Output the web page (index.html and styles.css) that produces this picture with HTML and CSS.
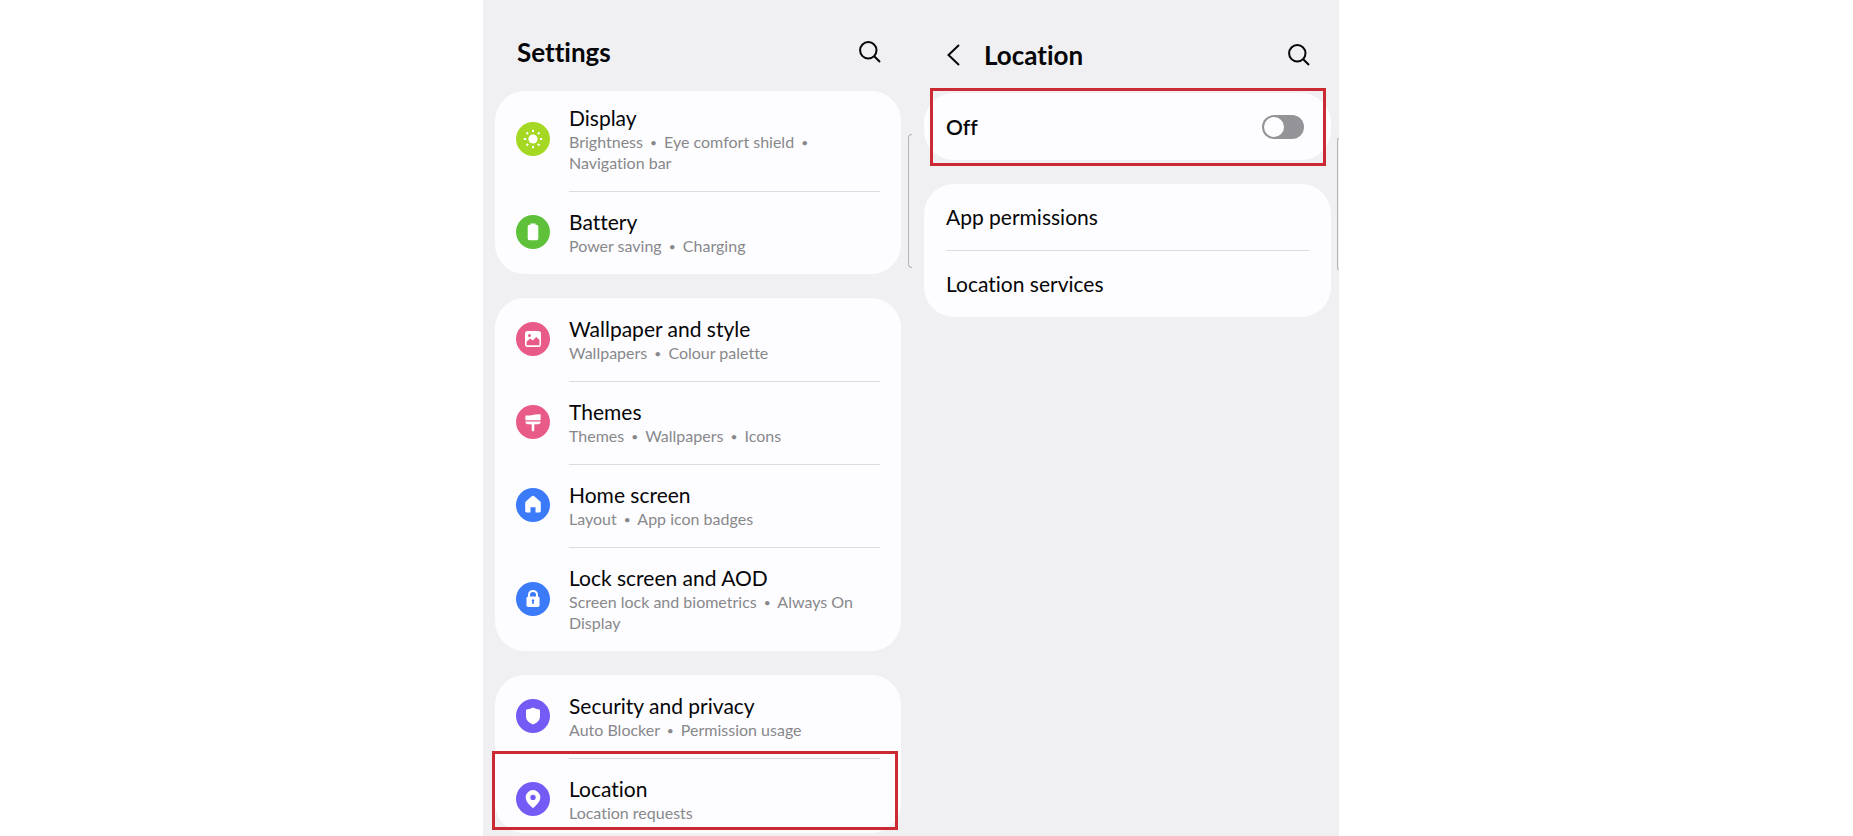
FILE: index.html
```html
<!DOCTYPE html>
<html lang="en">
<head>
<meta charset="utf-8">
<meta name="viewport" content="width=device-width, initial-scale=1">
<title>Settings</title>
<link rel="stylesheet" href="styles.css">
</head>
<body>
<main class="screens">
  <section class="pane pane-settings" aria-labelledby="settings-title">
    <header class="bar">
      <h1 class="bar-title" id="settings-title">Settings</h1>
      <button class="icon-button" type="button" aria-label="Search settings">
        <svg class="search" viewBox="0 0 22 22"><circle cx="9.3" cy="9.3" r="8.2"/><path d="M15.2 15.2 21 21"/></svg>
      </button>
    </header>

    <nav class="card">
      <a class="row row-first" href="#display">
        <svg class="badge lime" viewBox="0 0 34 34"><circle class="disc" cx="17" cy="17" r="17"/><circle cx="17" cy="17" r="4.6"/><path class="rays" d="M17 7.8v2.300M17 23.900v2.300M7.800 17h2.300M23.900 17h2.300M10.500 10.500l1.600 1.600M21.900 21.900l1.600 1.600M10.500 23.500l1.600-1.600M21.900 12.100l1.600-1.600"/></svg>
        <span class="label"><span class="name">Display</span><span class="detail">Brightness <i class="dot">•</i> Eye comfort shield <i class="dot">•</i> Navigation bar</span></span>
      </a>
      <a class="row" href="#battery">
        <svg class="badge green" viewBox="0 0 34 34"><circle class="disc" cx="17" cy="17" r="17"/><path d="M14.500 8.600h5v1.200h1q1.800 0 1.800 1.800v11.800q0 1.800-1.800 1.800h-7q-1.800 0-1.800-1.800V11.600q0-1.800 1.800-1.800h1z"/></svg>
        <span class="label"><span class="name">Battery</span><span class="detail">Power saving <i class="dot">•</i> Charging</span></span>
      </a>
    </nav>

    <nav class="card">
      <a class="row" href="#wallpaper">
        <svg class="badge pink" viewBox="0 0 34 34"><circle class="disc" cx="17" cy="17" r="17"/><rect x="9" y="9" width="16" height="16" rx="2.800"/><circle class="disc" cx="13.500" cy="13.500" r="1.500"/><path class="disc" d="M10.600 23.200v-3.500l3.600-3.200 2.500 2 3.600-3.600 3.200 3v5.300z"/></svg>
        <span class="label"><span class="name">Wallpaper and style</span><span class="detail">Wallpapers <i class="dot">•</i> Colour palette</span></span>
      </a>
      <a class="row" href="#themes">
        <svg class="badge pink" viewBox="0 0 34 34"><circle class="disc" cx="17" cy="17" r="17"/><path d="M9.400 10.500q3.500.4 7-.6 4-1 8.200-.6v6H9.400z"/><path d="M9.400 16.600h15.200q0 2.600-2.400 2.600h-3.100q-.8 0-.8.900v4.600q0 1.700-1.300 1.700t-1.300-1.700v-4.600q0-.9-.8-.9h-3.100q-2.400 0-2.400-2.600z"/></svg>
        <span class="label"><span class="name">Themes</span><span class="detail">Themes <i class="dot">•</i> Wallpapers <i class="dot">•</i> Icons</span></span>
      </a>
      <a class="row" href="#home">
        <svg class="badge blue" viewBox="0 0 34 34"><circle class="disc" cx="17" cy="17" r="17"/><path d="M17 7.800q.6 0 1.200.5l5.800 4.900q.8.700.8 1.700v8.200q0 1.400-1.400 1.400H19.500v-5.300h-5v5.300h-3.900q-1.400 0-1.400-1.400v-8.200q0-1 .8-1.700l5.800-4.900q.6-.5 1.200-.5z"/></svg>
        <span class="label"><span class="name">Home screen</span><span class="detail">Layout <i class="dot">•</i> App icon badges</span></span>
      </a>
      <a class="row" href="#lock">
        <svg class="badge blue" viewBox="0 0 34 34"><circle class="disc" cx="17" cy="17" r="17"/><path class="shackle" d="M13 15.500v-2.600a4 4 0 0 1 8 0v2.600"/><rect x="10.500" y="14.500" width="13" height="10.500" rx="1.800"/><path class="disc" d="M17 17.300a1.400 1.400 0 0 1 .8 2.500v2.200h-1.600v-2.200a1.400 1.400 0 0 1 .8-2.500z"/></svg>
        <span class="label"><span class="name">Lock screen and AOD</span><span class="detail">Screen lock and biometrics <i class="dot">•</i> Always On Display</span></span>
      </a>
    </nav>

    <nav class="card">
      <a class="row" href="#security">
        <svg class="badge violet" viewBox="0 0 34 34"><circle class="disc" cx="17" cy="17" r="17"/><path d="M17 8.500q2.800 1.700 6.200 2 .8.100.8.900v6.300q0 5-7 7.800-7-2.800-7-7.800v-6.300q0-.8.800-.9 3.400-.3 6.200-2z"/></svg>
        <span class="label"><span class="name">Security and privacy</span><span class="detail">Auto Blocker <i class="dot">•</i> Permission usage</span></span>
      </a>
      <a class="row row-marked" href="#location">
        <svg class="badge violet" viewBox="0 0 34 34"><circle class="disc" cx="17" cy="17" r="17"/><path d="M17 8a7.300 7.300 0 0 1 7.300 7.300c0 4.300-3.300 7.200-6.200 9.900q-1.100 1-2.200 0c-2.900-2.700-6.200-5.600-6.200-9.900A7.300 7.300 0 0 1 17 8z"/><circle class="disc" cx="17" cy="15.400" r="2.700"/></svg>
        <span class="label"><span class="name">Location</span><span class="detail">Location requests</span></span>
        <span class="marker marker-row"></span>
      </a>
    </nav>
    <span class="edge-handle edge-left"></span>
  </section>

  <section class="pane pane-location" aria-labelledby="location-title">
    <header class="bar">
      <button class="icon-button back" type="button" aria-label="Back">
        <svg class="chevron" viewBox="0 0 13 22"><path d="M12 1 1.500 11 12 21"/></svg>
      </button>
      <h1 class="bar-title" id="location-title">Location</h1>
      <button class="icon-button" type="button" aria-label="Search location settings">
        <svg class="search" viewBox="0 0 22 22"><circle cx="9.300" cy="9.300" r="8.200"/><path d="M15.200 15.200 21 21"/></svg>
      </button>
    </header>

    <div class="card switch-card">
      <label class="switch-label" for="location-switch">Off</label>
      <input class="switch" id="location-switch" type="checkbox" role="switch">
      <span class="marker marker-switch"></span>
    </div>

    <nav class="card links">
      <a class="link" href="#permissions">App permissions</a>
      <a class="link" href="#services">Location services</a>
    </nav>
    <span class="edge-handle edge-right"></span>
  </section>
</main>
</body>
</html>
```
FILE: styles.css
```css
* {
  box-sizing: border-box;
}

body {
  margin: 0;
  background: #fff;
  color: #060608;
  font-family: Lato, "Liberation Sans", sans-serif;
  font-variant-ligatures: none;
}

.screens {
  display: grid;
  grid-template-columns: 483fr 429fr 427fr 514fr;
  min-height: 100vh;
}

.pane {
  position: relative;
  display: flex;
  flex-direction: column;
  min-width: 0;
  background: #f0f0f2;
}

.pane-settings {
  grid-column: 2;
  gap: 24px;
  padding: 14px 11px 2px 12px;
}

.pane-location {
  grid-column: 3;
  gap: 24px;
  padding: 16px 8px 2px 12px;
}

.bar {
  display: flex;
  align-items: center;
  height: 77px;
  margin-bottom: -24px;
  padding: 0 20px 2px 22px;
}

.pane-location .bar {
  padding: 0 21px 0 23px;
}

.bar-title {
  flex: 1;
  margin: 0;
  font-size: 26px;
  font-weight: 700;
  line-height: 32px;
}

.icon-button {
  display: flex;
  padding: 0;
  border: 0;
  background: none;
  color: inherit;
}

.back {
  margin-right: 24px;
}

.search,
.chevron {
  width: 22px;
  height: 22px;
  fill: none;
  stroke: currentColor;
  stroke-width: 2;
}

.chevron {
  width: 13px;
}

.card {
  padding-top: 1px;
  border-radius: 30px;
  background: #fdfdff;
}

.row {
  position: relative;
  display: flex;
  align-items: center;
  gap: 19px;
  padding: 16px 21px 18px;
  color: inherit;
  text-decoration: none;
}

.row-first {
  padding-top: 12px;
}

.row-marked {
  padding-bottom: 10px;
}

.row:not(:last-child) {
  margin-bottom: 1px;
}

.row:not(:last-child)::after {
  content: "";
  position: absolute;
  right: 21px;
  bottom: -1px;
  left: 74px;
  height: 1px;
  background: #dcdcdf;
}

.label {
  flex: 1;
  min-width: 0;
}

.name,
.detail {
  display: block;
}

.name {
  font-size: 21px;
  line-height: 27px;
}

.detail {
  color: #88888b;
  font-size: 16px;
  line-height: 21px;
}

.dot {
  margin: 0 3px;
  font-size: 12px;
  font-style: normal;
  line-height: 1;
  vertical-align: 1px;
}

.badge {
  flex: none;
  width: 34px;
  height: 34px;
  fill: #fff;
}

.badge .disc {
  fill: currentColor;
}

.rays,
.shackle {
  fill: none;
  stroke: #fff;
  stroke-width: 2;
}

.lime {
  color: #a5d822;
}

.green {
  color: #5fc13a;
}

.pink {
  color: #e85a87;
}

.blue {
  color: #3b7af8;
}

.violet {
  color: #755bf6;
}

.marker {
  position: absolute;
  border: 3px solid #cb2a32;
  pointer-events: none;
}

.marker-row {
  inset: -8px 3px 3px -3px;
}

.marker-switch {
  inset: -5px 5px -6px 6px;
}

.switch-card {
  position: relative;
  display: flex;
  align-items: center;
  justify-content: space-between;
  height: 67px;
  padding: 0 27px 0 22px;
}

.switch-label {
  font-size: 21px;
  font-weight: 600;
  line-height: 28px;
}

.switch {
  appearance: none;
  width: 42px;
  height: 24px;
  margin: 0;
  padding: 2px;
  border-radius: 12px;
  background: #949397;
}

.switch::before {
  content: "";
  display: block;
  width: 20px;
  height: 20px;
  border-radius: 50%;
  background: #fdfdff;
}

.switch:checked::before {
  margin-left: auto;
}

.links {
  padding: 0 22px;
}

.link {
  display: block;
  padding: 19px 0;
  color: inherit;
  font-size: 21px;
  line-height: 28px;
  text-decoration: none;
}

.link + .link {
  border-top: 1px solid #dcdcdf;
}

.edge-handle {
  position: absolute;
  right: 0;
  border: 1px solid #b4b4b7;
  border-right: 0;
}

.edge-left {
  top: 134px;
  width: 4px;
  height: 134px;
  border-radius: 4px 0 0 4px;
}

.edge-right {
  top: 138px;
  width: 2px;
  height: 132px;
  border-radius: 2px 0 0 2px;
}
```
